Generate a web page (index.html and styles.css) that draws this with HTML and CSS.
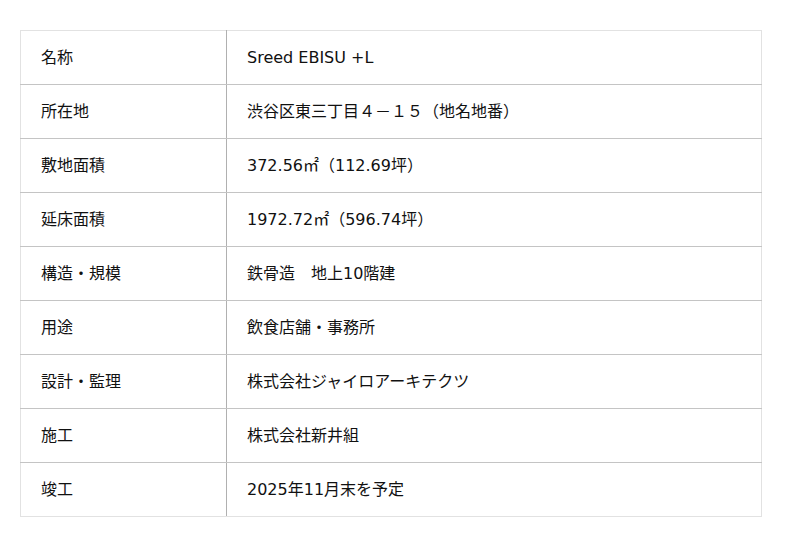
FILE: index.html
```html
<!DOCTYPE html>
<html lang="ja">
<head>
<meta charset="utf-8">
<link rel="stylesheet" href="styles.css">
</head>
<body>
<table class="spec">
<tr><th>名称</th><td>Sreed EBISU +L</td></tr>
<tr><th>所在地</th><td>渋谷区東三丁目４－１５（地名地番）</td></tr>
<tr><th>敷地面積</th><td>372.56㎡（112.69坪）</td></tr>
<tr><th>延床面積</th><td>1972.72㎡（596.74坪）</td></tr>
<tr><th>構造・規模</th><td>鉄骨造　地上10階建</td></tr>
<tr><th>用途</th><td>飲食店舗・事務所</td></tr>
<tr><th>設計・監理</th><td>株式会社ジャイロアーキテクツ</td></tr>
<tr><th>施工</th><td>株式会社新井組</td></tr>
<tr><th>竣工</th><td>2025年11月末を予定</td></tr>
</table>
</body>
</html>
```
FILE: styles.css
```css
html, body { margin: 0; padding: 0; background: #fff; }
body { padding: 30px 20px; font-family: "DejaVu Sans", "Noto Sans CJK JP", sans-serif; color: #111; }
.spec {
  width: 742px;
  border-collapse: collapse;
  font-size: 16px;
  line-height: 20px;
  border: 1px solid #e2e2e2;
}
.spec th, .spec td {
  height: 54px;
  padding: 0 0 0 20px;
  text-align: left;
  font-weight: normal;
  border-bottom: 1px solid #c4c4c4;
  box-sizing: border-box;
}
.spec tr:last-child th, .spec tr:last-child td { border-bottom: 1px solid #e2e2e2; }
.spec th { width: 206px; border-right: 1px solid #b0b0b0; }
```
